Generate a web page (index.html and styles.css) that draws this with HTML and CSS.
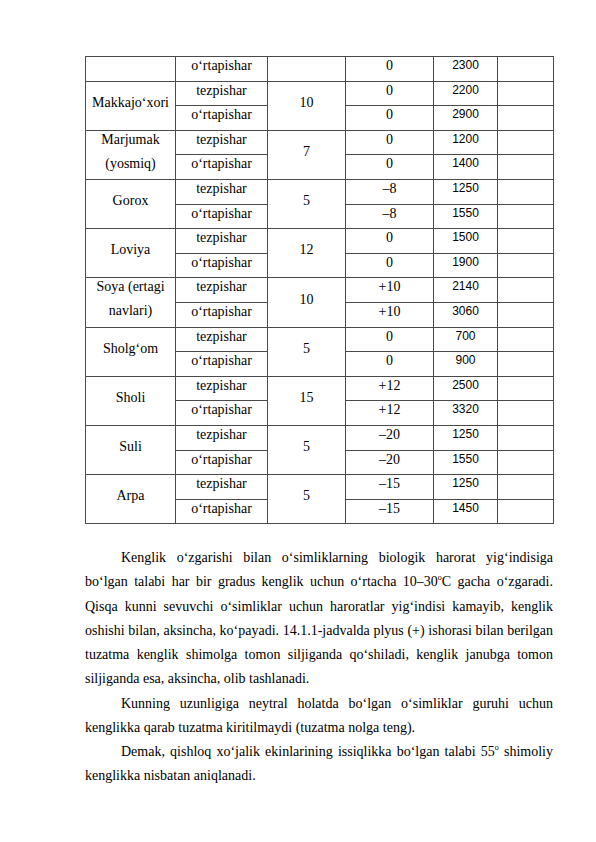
FILE: index.html
```html
<!DOCTYPE html>
<html lang="uz">
<head>
<meta charset="utf-8">
<title>Jadval</title>
<link rel="stylesheet" href="styles.css">
</head>
<body>
<div class="page">
  <table class="crops">
    <colgroup>
      <col class="c1"><col class="c2"><col class="c3"><col class="c4"><col class="c5"><col class="c6">
    </colgroup>
    <tbody>
      <tr><td></td><td>o‘rtapishar</td><td></td><td>0</td><td class="num">2300</td><td></td></tr>

      <tr><td rowspan="2" class="mid">Makkajo‘xori</td><td>tezpishar</td><td rowspan="2" class="mid">10</td><td>0</td><td class="num">2200</td><td></td></tr>
      <tr><td>o‘rtapishar</td><td>0</td><td class="num">2900</td><td></td></tr>

      <tr><td rowspan="2" class="two"><span>Marjumak</span><span>(yosmiq)</span></td><td>tezpishar</td><td rowspan="2" class="mid">7</td><td>0</td><td class="num">1200</td><td></td></tr>
      <tr><td>o‘rtapishar</td><td>0</td><td class="num">1400</td><td></td></tr>

      <tr><td rowspan="2" class="mid">Gorox</td><td>tezpishar</td><td rowspan="2" class="mid">5</td><td>–8</td><td class="num">1250</td><td></td></tr>
      <tr><td>o‘rtapishar</td><td>–8</td><td class="num">1550</td><td></td></tr>

      <tr><td rowspan="2" class="mid">Loviya</td><td>tezpishar</td><td rowspan="2" class="mid">12</td><td>0</td><td class="num">1500</td><td></td></tr>
      <tr><td>o‘rtapishar</td><td>0</td><td class="num">1900</td><td></td></tr>

      <tr><td rowspan="2" class="two"><span>Soya (ertagi</span><span>navlari)</span></td><td>tezpishar</td><td rowspan="2" class="mid">10</td><td>+10</td><td class="num">2140</td><td></td></tr>
      <tr><td>o‘rtapishar</td><td>+10</td><td class="num">3060</td><td></td></tr>

      <tr><td rowspan="2" class="mid">Sholg‘om</td><td>tezpishar</td><td rowspan="2" class="mid">5</td><td>0</td><td class="num">700</td><td></td></tr>
      <tr><td>o‘rtapishar</td><td>0</td><td class="num">900</td><td></td></tr>

      <tr><td rowspan="2" class="mid">Sholi</td><td>tezpishar</td><td rowspan="2" class="mid">15</td><td>+12</td><td class="num">2500</td><td></td></tr>
      <tr><td>o‘rtapishar</td><td>+12</td><td class="num">3320</td><td></td></tr>

      <tr><td rowspan="2" class="mid">Suli</td><td>tezpishar</td><td rowspan="2" class="mid">5</td><td>–20</td><td class="num">1250</td><td></td></tr>
      <tr><td>o‘rtapishar</td><td>–20</td><td class="num">1550</td><td></td></tr>

      <tr><td rowspan="2" class="mid">Arpa</td><td>tezpishar</td><td rowspan="2" class="mid">5</td><td>–15</td><td class="num">1250</td><td></td></tr>
      <tr><td>o‘rtapishar</td><td>–15</td><td class="num">1450</td><td></td></tr>
    </tbody>
  </table>

  <div class="text">
    <p class="para">
      <span class="ln first">Kenglik o‘zgarishi bilan o‘simliklarning biologik harorat yig‘indisiga</span>
      <span class="ln">bo‘lgan talabi har bir gradus kenglik uchun o‘rtacha 10–30<sup class="deg">o</sup>C gacha o‘zgaradi.</span>
      <span class="ln">Qisqa kunni sevuvchi o‘simliklar uchun haroratlar yig‘indisi kamayib, kenglik</span>
      <span class="ln">oshishi bilan, aksincha, ko‘payadi. 14.1.1-jadvalda plyus (+) ishorasi bilan berilgan</span>
      <span class="ln">tuzatma kenglik shimolga tomon siljiganda qo‘shiladi, kenglik janubga tomon</span>
      <span class="ln last">siljiganda esa, aksincha, olib tashlanadi.</span>
    </p>
    <p class="para">
      <span class="ln first">Kunning uzunligiga neytral holatda bo‘lgan o‘simliklar guruhi uchun</span>
      <span class="ln last">kenglikka qarab tuzatma kiritilmaydi (tuzatma nolga teng).</span>
    </p>
    <p class="para">
      <span class="ln first">Demak, qishloq xo‘jalik ekinlarining issiqlikka bo‘lgan talabi 55<sup class="deg">o</sup> shimoliy</span>
      <span class="ln last">kenglikka nisbatan aniqlanadi.</span>
    </p>
  </div>
</div>
</body>
</html>
```

FILE: styles.css
```css
html, body {
  margin: 0;
  padding: 0;
  background: #ffffff;
}

body {
  font-family: "Liberation Serif", "Times New Roman", serif;
  color: #000000;
}

.page {
  width: 468px;
  padding: 56px 0 0 85px;
}

.crops {
  width: 468px;
  border-collapse: collapse;
  table-layout: fixed;
  font-size: 14px;
}

.c1 { width: 90px; }
.c2 { width: 92px; }
.c3 { width: 78px; }
.c4 { width: 88px; }
.c5 { width: 64px; }
.c6 { width: 56px; }

.crops td {
  border: 1px solid #4a4a4a;
  padding: 0 0 6.4px;
  line-height: 17.2px;
  text-align: center;
  vertical-align: top;
}

.crops td.mid {
  vertical-align: middle;
}

.crops td.two {
  vertical-align: top;
  padding: 0;
}

.crops td.two span {
  display: block;
  padding-bottom: 6.9px;
}

.crops td.num {
  font-family: "Liberation Sans", Arial, sans-serif;
  font-size: 12px;
}

.text {
  margin-top: 22px;
  font-size: 14px;
  line-height: 24.2px;
}

.para {
  margin: 0;
}

.ln {
  display: block;
  text-align: justify;
  text-align-last: justify;
}

.ln.first {
  padding-left: 36px;
}

.ln.last {
  text-align-last: left;
}

.deg {
  font-size: 8px;
  line-height: 0;
  vertical-align: 6px;
}
```
